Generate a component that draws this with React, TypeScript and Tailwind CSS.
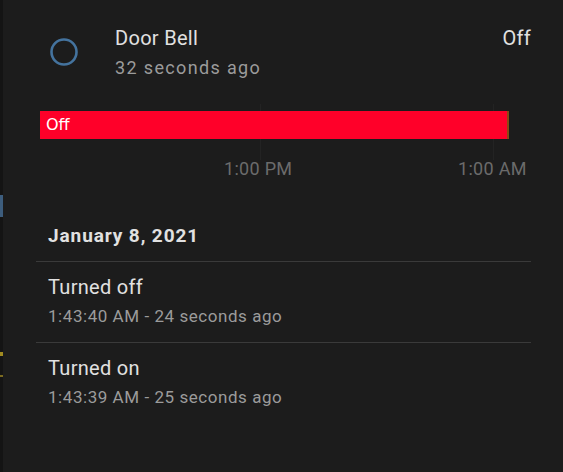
import React from "react";

export default function App() {
  return (
    <div
      className="w-[563px] h-[472px] bg-[#1c1c1c] flex overflow-hidden"
      style={{ fontFamily: "Roboto, 'Noto Sans', sans-serif" }}
    >
      {/* left edge strip */}
      <div className="w-[3px] h-full bg-[#141414] flex flex-col">
        <div className="h-[195px]" />
        <div className="h-[22px] bg-[#3d5d7d]" />
        <div className="h-[135px]" />
        <div className="h-[4px] bg-[#a08a20]" />
        <div className="h-[19px]" />
        <div className="h-[2px] bg-[#7a6a20]" />
      </div>
      <div className="flex-1 flex flex-col pl-[33px] pr-[32px]">
        {/* header */}
        <div className="flex items-start pt-[26px]">
          <div className="w-[40px] h-[40px] mt-[6px] ml-[8px] flex items-center justify-center">
            <svg width="30" height="30" viewBox="0 0 30 30">
              <circle cx="15" cy="15" r="12.5" fill="none" stroke="#44739e" strokeWidth="2.6" />
            </svg>
          </div>
          <div className="flex-1 ml-[31px] flex flex-col">
            <div className="text-[20px] leading-[24px] tracking-[0.3px] text-[#e1e1e1]">Door Bell</div>
            <div className="mt-[5px] text-[18px] leading-[26px] tracking-[1.35px] text-[#9b9b9b]">32 seconds ago</div>
          </div>
          <div className="text-[20px] leading-[24px] tracking-[0.3px] text-[#e1e1e1]">Off</div>
        </div>

        {/* timeline */}
        <div className="mt-[30px] relative w-[469px] ml-[4px]">
          <div className="absolute left-[220px] top-[-7px] w-px h-[56px] bg-[#232323]" />
          <div className="absolute left-[453px] top-[-7px] w-px h-[56px] bg-[#232323]" />
          <div className="relative h-[28px] bg-[#ff0029] flex items-center">
            <span
              className="pl-[6px] text-[16px] text-white"
              style={{ fontFamily: "'DejaVu Sans', sans-serif" }}
            >
              Off
            </span>
            <div className="absolute right-0 top-0 h-full w-[2px] bg-[#8a4a14]" />
          </div>
          <div className="relative h-[36px] text-[18px] text-[#6b6b6b] tracking-[0.3px]">
            <span className="absolute left-[184px] top-[20px] leading-[20px]">1:00 PM</span>
            <span className="absolute left-[418px] top-[20px] leading-[20px] whitespace-nowrap">1:00 AM</span>
          </div>
        </div>

        {/* logbook */}
        <div className="mt-[50px] flex flex-col">
          <div className="pl-[12px] text-[19px] leading-[22px] font-bold tracking-[0.9px] text-[#e1e1e1]">
            January 8, 2021
          </div>
          <div className="mt-[14px] h-px bg-[#3a3a3a]" />
          <div className="pl-[12px] pt-[13px] pb-[16px]">
            <div className="text-[20px] leading-[24px] tracking-[0.3px] text-[#e1e1e1]">Turned off</div>
            <div className="mt-[7px] text-[17px] leading-[20px] tracking-[0.55px] text-[#9b9b9b]">
              1:43:40 AM - 24 seconds ago
            </div>
          </div>
          <div className="h-px bg-[#3a3a3a]" />
          <div className="pl-[12px] pt-[13px] pb-[16px]">
            <div className="text-[20px] leading-[24px] tracking-[0.3px] text-[#e1e1e1]">Turned on</div>
            <div className="mt-[7px] text-[17px] leading-[20px] tracking-[0.55px] text-[#9b9b9b]">
              1:43:39 AM - 25 seconds ago
            </div>
          </div>
        </div>
      </div>
    </div>
  );
}
